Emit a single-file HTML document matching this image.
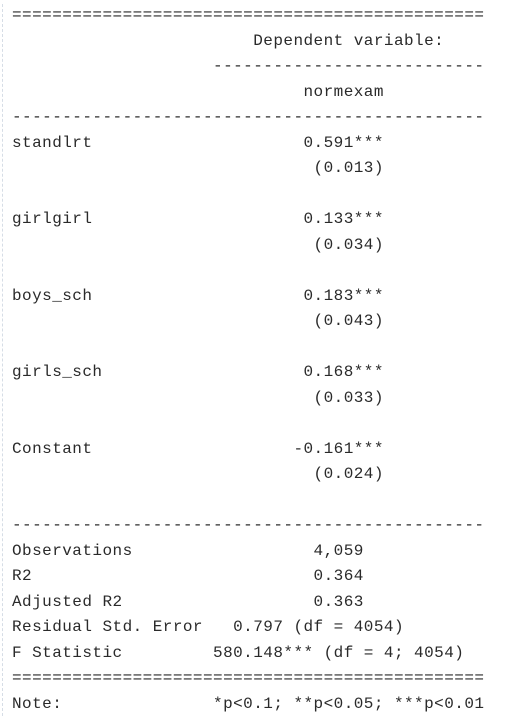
<!DOCTYPE html>
<html><head><meta charset="utf-8"><style>
html,body{margin:0;padding:0;background:#fff;width:514px;height:720px;overflow:hidden}
.m{position:absolute;left:2px;top:4px;height:712px;border-left:1px dashed #d6dde6}
pre{position:absolute;left:12px;top:3px;margin:0;font-family:"Liberation Mono",monospace;font-size:16px;letter-spacing:0.45px;line-height:25.5px;color:#2a2a2a}
</style></head><body>
<div class="m"></div>
<pre>===============================================
                        Dependent variable:
                    ---------------------------
                             normexam
-----------------------------------------------
standlrt                     0.591***
                              (0.013)

girlgirl                     0.133***
                              (0.034)

boys_sch                     0.183***
                              (0.043)

girls_sch                    0.168***
                              (0.033)

Constant                    -0.161***
                              (0.024)

-----------------------------------------------
Observations                  4,059
R2                            0.364
Adjusted R2                   0.363
Residual Std. Error   0.797 (df = 4054)
F Statistic         580.148*** (df = 4; 4054)
===============================================
Note:               *p&lt;0.1; **p&lt;0.05; ***p&lt;0.01</pre>
</body></html>
